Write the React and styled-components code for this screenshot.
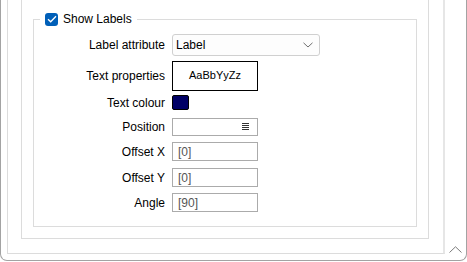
import React from 'react';
import styled, { createGlobalStyle } from 'styled-components';

const GlobalStyle = createGlobalStyle`
  html, body {
    margin: 0;
    padding: 0;
    background: #ffffff;
    overflow: hidden;
  }
  body {
    font-family: "Liberation Sans", Arial, sans-serif;
    color: #000;
  }
`;

const Frame = styled.div`
  display: flex;
  width: 467px;
  height: 261px;
  box-sizing: border-box;
  border: 1px solid #a3a3a3;
  border-top: none;
  border-radius: 0 0 7px 7px;
`;

const Panel = styled.div`
  flex: 1;
  margin: 0 0 6px 6px;
  padding: 0 14px 15px 13px;
  border: 1px solid #dcdcdc;
  border-top: none;
  border-right: 2px solid #e6e6e6;
`;

const ScrollColumn = styled.div`
  width: 21px;
  display: flex;
  flex-direction: column;
  justify-content: flex-end;
  align-items: center;
  padding-bottom: 7px;
`;

const OuterGroup = styled.div`
  border: 1px solid #dcdcdc;
  border-top: none;
  padding: 12px 11px 11px 11px;
`;

const GroupBox = styled.fieldset`
  margin: 0;
  padding: 8px 0 14px 0;
  border: 1px solid #dcdcdc;
  min-width: 0;
`;

const Legend = styled.legend`
  margin-left: 6px;
  padding: 0 5px;
  height: 14px;
  display: flex;
  align-items: center;
  gap: 5px;
  font-size: 12px;
  line-height: 14px;
`;

const CheckBox = styled.span`
  width: 13px;
  height: 13px;
  border-radius: 3px;
  background: #005fb8;
  display: flex;
  align-items: center;
  justify-content: center;
`;

const Row = styled.div`
  display: grid;
  grid-template-columns: 131px auto;
  column-gap: 7px;
  align-items: center;
  margin-top: ${(p) => p.$top}px;
`;

const Label = styled.span`
  text-align: right;
  font-size: 12px;
  line-height: 14px;
`;

const Select = styled.div`
  width: 148px;
  height: 22px;
  box-sizing: border-box;
  border: 1px solid #d0d0d0;
  border-radius: 3px;
  background: #fdfdfd;
  display: flex;
  align-items: center;
  justify-content: space-between;
  padding: 0 6px 0 3px;
  font-size: 12px;
`;

const FontBox = styled.div`
  width: 86px;
  height: 30px;
  box-sizing: border-box;
  border: 1px solid #000;
  display: flex;
  align-items: center;
  justify-content: center;
  font-size: 11px;
  padding-bottom: 2px;
`;

const Swatch = styled.div`
  width: 17px;
  height: 15px;
  box-sizing: border-box;
  border: 1px solid #000;
  border-radius: 2px;
  background: ${(p) => p.$color};
`;

const TextBox = styled.div`
  width: 86px;
  height: ${(p) => p.$h}px;
  box-sizing: border-box;
  border: 1px solid #ababab;
  display: flex;
  align-items: center;
  justify-content: space-between;
  padding: 0 8px 0 5px;
  font-size: 12px;
  color: #555;
`;

const Check = () => (
  <svg width="10" height="8" viewBox="0 0 10 8">
    <path d="M1 4.2 L3.7 6.8 L9 1.3" fill="none" stroke="#fff" strokeWidth="1.3" />
  </svg>
);

const Chevron = () => (
  <svg width="10" height="6" viewBox="0 0 10 6">
    <path d="M0.5 0.8 L5 5 L9.5 0.8" fill="none" stroke="#6f6f6f" strokeWidth="1" />
  </svg>
);

const ListIcon = () => (
  <svg width="7" height="8" viewBox="0 0 7 8">
    <path d="M0 0.5h7M0 2.5h7M0 4.5h7M0 6.5h7" stroke="#333" strokeWidth="1" />
  </svg>
);

const ScrollUp = () => (
  <svg width="13" height="7" viewBox="0 0 13 7">
    <path d="M0.5 6.5 L6.5 0.8 L12.5 6.5" fill="none" stroke="#7a7a7a" strokeWidth="1" />
  </svg>
);

export default function App() {
  return (
    <>
      <GlobalStyle />
      <Frame>
        <Panel>
          <OuterGroup>
            <GroupBox>
              <Legend>
                <CheckBox>
                  <Check />
                </CheckBox>
                Show Labels
              </Legend>
              <Row $top={0}>
                <Label>Label attribute</Label>
                <Select>
                  <span>Label</span>
                  <Chevron />
                </Select>
              </Row>
              <Row $top={5}>
                <Label>Text properties</Label>
                <FontBox>AaBbYyZz</FontBox>
              </Row>
              <Row $top={4}>
                <Label>Text colour</Label>
                <Swatch $color="#000066" />
              </Row>
              <Row $top={8}>
                <Label>Position</Label>
                <TextBox $h={18}>
                  <span />
                  <ListIcon />
                </TextBox>
              </Row>
              <Row $top={6}>
                <Label>Offset X</Label>
                <TextBox $h={19}>[0]</TextBox>
              </Row>
              <Row $top={7}>
                <Label>Offset Y</Label>
                <TextBox $h={19}>[0]</TextBox>
              </Row>
              <Row $top={6}>
                <Label>Angle</Label>
                <TextBox $h={19}>[90]</TextBox>
              </Row>
            </GroupBox>
          </OuterGroup>
        </Panel>
        <ScrollColumn>
          <ScrollUp />
        </ScrollColumn>
      </Frame>
    </>
  );
}
